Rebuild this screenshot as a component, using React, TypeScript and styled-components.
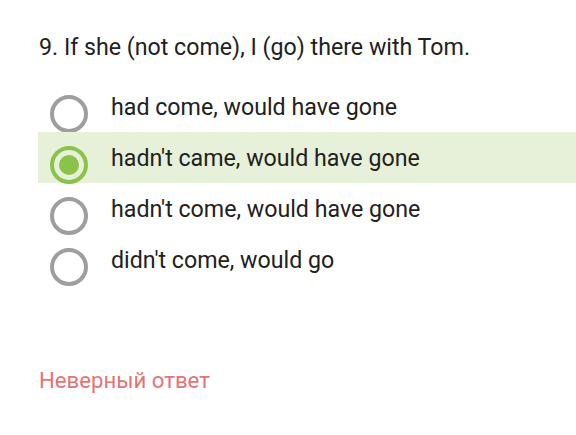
import React from 'react';
import styled, { createGlobalStyle } from 'styled-components';

const GlobalStyle = createGlobalStyle`
  body {
    margin: 0;
    background: #ffffff;
    font-family: Roboto, "Noto Sans", sans-serif;
  }
`;

const Page = styled.div`
  width: 576px;
  height: 435px;
  padding: 30px 0 0 38px;
  box-sizing: border-box;
  overflow: hidden;
`;

const Question = styled.div`
  font-size: 23.2px;
  line-height: 34px;
  color: #212121;
  padding-left: 1px;
  margin-bottom: 17px;
`;

const Options = styled.div`
  display: flex;
  flex-direction: column;
`;

const Option = styled.div<{ $selected?: boolean }>`
  display: flex;
  align-items: center;
  height: 51px;
  padding-left: 12px;
  background: ${(p) => (p.$selected ? '#e7f1d9' : 'transparent')};
`;

const Radio = styled.div<{ $checked?: boolean }>`
  width: 38px;
  height: 38px;
  box-sizing: border-box;
  border-radius: 50%;
  border: 4px solid ${(p) => (p.$checked ? '#8bc34a' : '#9e9e9e')};
  display: flex;
  align-items: center;
  justify-content: center;
  margin-top: 14px;
  flex-shrink: 0;
  &::after {
    content: '';
    display: ${(p) => (p.$checked ? 'block' : 'none')};
    width: 20px;
    height: 20px;
    border-radius: 50%;
    background: #8bc34a;
  }
`;

const Label = styled.div`
  font-size: 23.2px;
  line-height: 30px;
  color: #212121;
  margin-left: 23px;
`;

const Verdict = styled.div`
  margin-top: 80px;
  padding-left: 1px;
  font-size: 22.2px;
  line-height: 30px;
  color: #e57373;
`;

const options = [
  { text: 'had come, would have gone' },
  { text: "hadn't came, would have gone", selected: true },
  { text: "hadn't come, would have gone" },
  { text: "didn't come, would go" },
];

const App: React.FunctionComponent = () => (
  <>
    <GlobalStyle />
    <Page>
      <Question>9. If she (not come), I (go) there with Tom.</Question>
      <Options>
        {options.map((o) => (
          <Option key={o.text} $selected={o.selected}>
            <Radio $checked={o.selected} />
            <Label>{o.text}</Label>
          </Option>
        ))}
      </Options>
      <Verdict>Неверный ответ</Verdict>
    </Page>
  </>
);

export default App;
